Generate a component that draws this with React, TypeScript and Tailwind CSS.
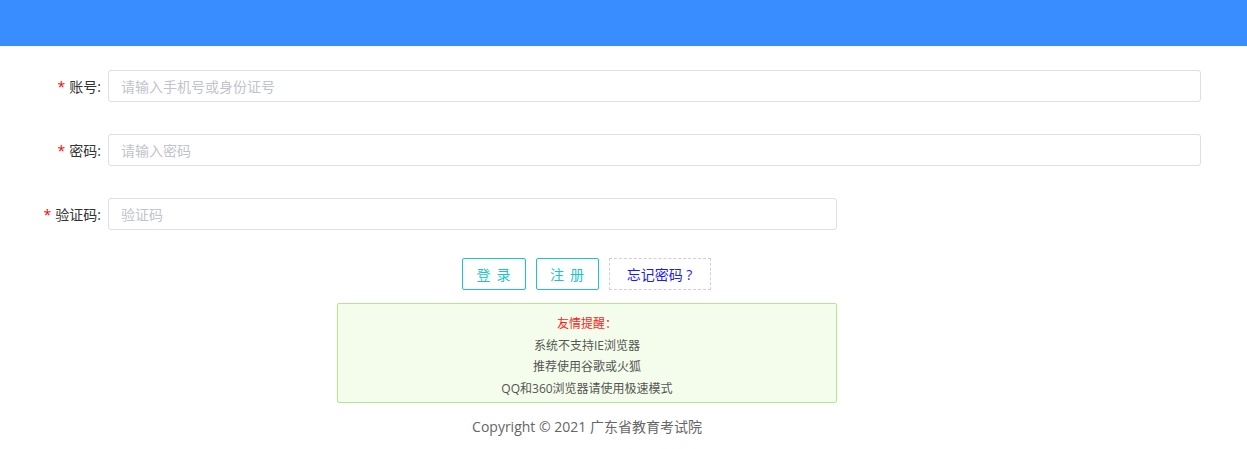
import React from "react";

const font = { fontFamily: '"Microsoft YaHei", "Open Sans", "Noto Sans CJK SC", sans-serif' };

function Row({ label, placeholder, wide }: { label: string; placeholder: string; wide: boolean }) {
  return (
    <div className="flex items-center">
      <label className="w-[108px] pr-[7px] text-right text-[14px] text-[#333]">
        <span className="text-[#ff0000] mr-[4px]">*</span>
        {label}:
      </label>
      <input
        className={
          "h-[32px] rounded-[3px] border border-[#dcdfe6] px-[12px] text-[14px] outline-none placeholder:text-[#c0c4cc] " +
          (wide ? "w-[1093px]" : "w-[729px]")
        }
        placeholder={placeholder}
      />
    </div>
  );
}

export default function App() {
  return (
    <div className="w-[1247px] h-[449px] bg-white" style={font}>
      <div className="h-[46px] bg-[#3a8dff]" />
      <div className="pt-[24px] flex flex-col gap-[32px]">
        <Row label="账号" placeholder="请输入手机号或身份证号" wide />
        <Row label="密码" placeholder="请输入密码" wide />
        <Row label="验证码" placeholder="验证码" wide={false} />
      </div>
      <div className="ml-[337px] w-[500px] mt-[28px]">
        <div className="flex justify-center gap-[10px] pr-[2px]">
          <button className="w-[64px] h-[32px] rounded-[2px] border border-[#1cc4c9] text-[#1cc4c9] text-[14px] tracking-[6px] pl-[6px]">
            登录
          </button>
          <button className="w-[63px] h-[32px] rounded-[2px] border border-[#1cc4c9] text-[#1cc4c9] text-[14px] tracking-[6px] pl-[6px]">
            注册
          </button>
          <button className="w-[102px] h-[32px] border border-dashed border-[#d0d0d0] text-[#1a1aff] text-[14px]">
            忘记密码 ?
          </button>
        </div>
        <div className="mt-[13px] h-[100px] rounded-[2px] border border-[#b3e88f] bg-[#f4fdeb] pt-[9px] text-center text-[12px] leading-[21.5px] text-[#555]">
          <div className="text-[#ff1a1a]">友情提醒：</div>
          <div>系统不支持IE浏览器</div>
          <div>推荐使用谷歌或火狐</div>
          <div>QQ和360浏览器请使用极速模式</div>
        </div>
        <div className="mt-[13px] text-center text-[14px] text-[#666]">Copyright © 2021 广东省教育考试院</div>
      </div>
    </div>
  );
}
